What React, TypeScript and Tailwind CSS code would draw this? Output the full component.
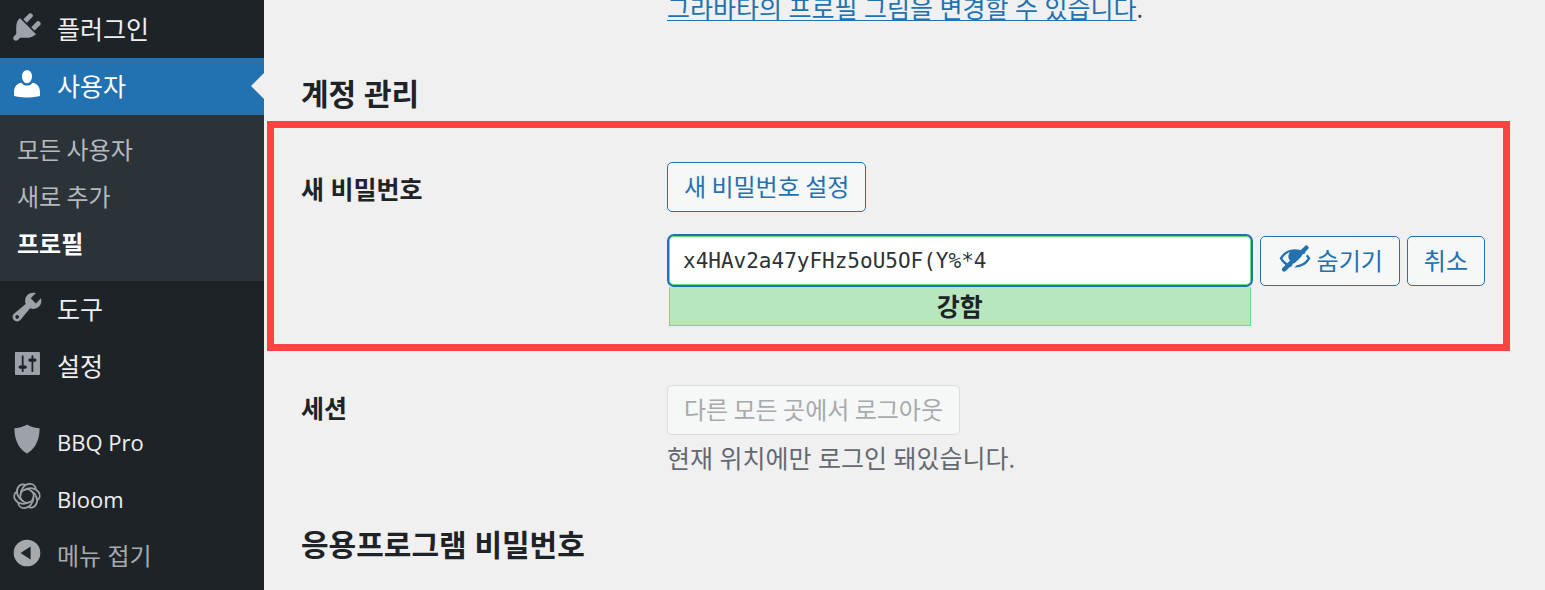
import { ReactNode } from "react";

const ICONS = {
  plugin:
    "M13.11 4.36L9.87 7.6 8 5.73l3.24-3.24c.35-.34 1.05-.2 1.56.32.52.51.66 1.21.31 1.55zm-8 1.77l.91-1.12 9.01 9.01-1.19.84c-.71.71-2.63 1.16-3.82 1.16H6.14L4.9 17.26c-.59.59-1.54.59-2.12 0-.59-.58-.59-1.53 0-2.12l1.24-1.24v-3.88c0-1.13.4-3.19 1.09-3.89zm7.26 3.97l3.24-3.24c.34-.35 1.04-.21 1.55.31.52.51.66 1.21.31 1.55l-3.24 3.25z",
  user: "M10 9.6c-1.7 0-2.8-2-2.8-3.9S8.3 2.3 10 2.3s2.8 1.500 2.8 3.400S11.700 9.600 10 9.600zM7 9.300Q8 10.900 10 10.900T13 9.300C15.700 9.600 17.200 11.800 17.200 14.200V16.600S13.700 17.500 10 17.500 2.800 16.600 2.800 16.600V14.200C2.800 11.800 4.300 9.600 7 9.300z",
  tools:
    "M16.68 9.77c-1.34 1.34-3.3 1.67-4.95.99l-5.41 6.52c-.99.99-2.59.99-3.58 0s-.99-2.59 0-3.57l6.52-5.42c-.68-1.65-.35-3.61.99-4.95 1.28-1.28 3.12-1.62 4.72-1.06l-2.89 2.89 2.82 2.82 2.86-2.87c.53 1.58.18 3.39-1.08 4.65zM3.81 16.21c.4.39 1.04.39 1.43 0 .4-.4.4-1.04 0-1.43-.39-.4-1.03-.4-1.43 0-.39.39-.39 1.03 0 1.43z",
  settings:
    "M17.200 15.600V3.800Q17.200 3.300 16.700 3.300H3.800Q3.300 3.300 3.300 3.800V15.600Q3.300 16.100 3.800 16.100H16.700Q17.200 16.100 17.200 15.600zM8.100 10.800H9a.9.9 0 0 1 0 1.800H8.100V14a.5.5 0 0 1-1 0V12.600H6.200a.9.9 0 0 1 0-1.800H7.100V5.600a.5.5 0 0 1 1 0zM12.500 8.700H11.600a.9.9 0 0 1 0-1.800H12.500V5.600a.5.5 0 0 1 1 0V6.900H14.400a.9.9 0 0 1 0 1.800H13.500V14a.5.5 0 0 1-1 0z",
  shield: "M10 2s3 2 7 2c0 11-7 14-7 14S3 15 3 4c4 0 7-2 7-2z",
  collapse: "M10 2.6a7.4 7.4 0 1 0 0 14.8a7.4 7.4 0 1 0 0-14.8zM12 6.4v7.2L6.4 10z",
};

function Icon({ name }: { name: keyof typeof ICONS }) {
  return (
    <svg viewBox="0 0 20 20" className="mt-2 size-9 shrink-0 fill-current" fillRule="evenodd" aria-hidden="true">
      <path d={ICONS[name]} />
    </svg>
  );
}

function BloomIcon() {
  return (
    <svg viewBox="0 0 20 20" className="mt-2 size-9 shrink-0 fill-none stroke-current" aria-hidden="true">
      <circle cx="10" cy="10" r="3.7" strokeWidth="0.8" />
      {[0, 60, 120, 180, 240, 300].map((a) => (
        <path
          key={a}
          d="M6.300 10C6.300 6.200 8.600 3.400 11.400 3.300C13.400 3.200 14.800 4.500 14.900 6.400"
          strokeWidth="1"
          transform={`rotate(${a} 10 10)`}
        />
      ))}
    </svg>
  );
}

function HiddenIcon() {
  return (
    <svg viewBox="0 0 20 20" className="mb-1 size-9 shrink-0" fill="none" stroke="currentColor" aria-hidden="true">
      <path d="M2.200 10.200C5.600 4.300 14.400 4.300 17.800 10.200C14.400 16.100 5.600 16.100 2.200 10.200z" strokeWidth="1.3" />
      <circle cx="10" cy="9.2" r="3.7" fill="currentColor" stroke="none" />
      <path d="M6 17.700L18.300 5.700" stroke="#f6f7f7" strokeWidth="1.6" />
      <path d="M4 16.300L16.300 4.300" strokeWidth="2.5" strokeLinecap="round" />
    </svg>
  );
}

type ItemProps = { icon: ReactNode; label: string; active?: boolean; latin?: boolean };

function MenuItem({ icon, label, active, latin }: ItemProps) {
  return (
    <li className={active ? "relative bg-[#2271b1] text-white" : "text-[#9ca2a7]"}>
      <a href="#" className="flex gap-3 pl-[9px]">
        {icon}
        <span
          className={
            "leading-[57px] " + (active ? "text-white" : "text-[#f0f0f1]") + (latin ? " pt-px text-[22px]" : "")
          }
        >
          {label}
        </span>
      </a>
      {active && (
        <span className="absolute top-[15px] right-0 border-y-[13px] border-r-[13px] border-y-transparent border-r-[#f0f0f1]" />
      )}
    </li>
  );
}

const buttonBase =
  "h-[50px] shrink-0 rounded-[5px] border bg-[#f6f7f7] px-4 pb-0.5 font-['Noto_Sans_CJK_KR',sans-serif] text-[24px]";
const button = buttonBase + " border-[#2271b1] text-[#2271b1]";

export default function App() {
  return (
    <div className="flex h-screen overflow-hidden bg-[#f0f0f1] font-['Open_Sans','Noto_Sans_CJK_KR',sans-serif] text-[25px] text-[#3c434a]">
      <nav className="w-[264px] shrink-0 bg-[#1d2327] pt-px">
        <ul>
          <MenuItem icon={<Icon name="plugin" />} label="플러그인" />
          <MenuItem icon={<Icon name="user" />} label="사용자" active />
          <li className="bg-[#2c3338] pt-2.5 pb-[15px] pl-[17px] font-['Noto_Sans_CJK_KR',sans-serif] text-[24px] leading-[47px] text-[#b4b9be]">
            <ul>
              <li><a href="#">모든 사용자</a></li>
              <li><a href="#">새로 추가</a></li>
              <li><a href="#" className="font-bold text-white">프로필</a></li>
            </ul>
          </li>
          <MenuItem icon={<Icon name="tools" />} label="도구" />
          <MenuItem icon={<Icon name="settings" />} label="설정" />
        </ul>
        <ul className="mt-[18px] *:h-[57px]">
          <MenuItem icon={<Icon name="shield" />} label="BBQ Pro" latin />
          <MenuItem icon={<BloomIcon />} label="Bloom" latin />
        </ul>
        <button className="flex gap-3 pl-[9px] text-[#a7aaad]">
          <Icon name="collapse" />
          <span className="text-[24px] leading-[57px]">메뉴 접기</span>
        </button>
      </nav>

      <main className="min-w-0 flex-1 pl-[3px]">
        <p className="pl-[400px] leading-4">
          <a href="#" className="text-[#2271b1] underline decoration-1 underline-offset-2">
            그라바타의 프로필 그림을 변경할 수 있습니다
          </a>
          .
        </p>

        <h2 className="mt-[58px] pl-[34px] text-[30px] leading-10 font-bold text-[#1d2327]">계정 관리</h2>

        <section className="mt-[7px] mr-[35px] flex border-[7px] border-[#ff4141] pt-[34px] pr-[18px] pb-[18px] pl-[27px]">
          <label htmlFor="pass1" className="w-[366px] shrink-0 pt-[7px] leading-10 font-bold text-[#1d2327]">
            새 비밀번호
          </label>
          <div className="min-w-0 flex-1">
            <button className={button}>새 비밀번호 설정</button>
            <div className="mt-[22px] flex items-start gap-[7px]">
              <div className="min-w-0 flex-1">
                <input
                  id="pass1"
                  type="text"
                  defaultValue="x4HAv2a47yFHz5oU5OF(Y%*4"
                  className="block h-[53px] w-full rounded-[7px] border-2 border-[#2271b1] bg-white px-3.5 font-['DejaVu_Sans_Mono',monospace] text-[21px] text-[#2c3338] inset-ring inset-ring-[#68de7c] outline-none"
                />
                <div className="mx-0.5 h-[39px] border border-t-0 border-[#68de7c] bg-[#b8e6bf] text-center leading-[38px] font-bold text-[#1d2327]">
                  강함
                </div>
              </div>
              <button className={button + " mt-0.5 flex items-center gap-1"}>
                <HiddenIcon />
                숨기기
              </button>
              <button className={button + " mt-0.5"}>취소</button>
            </div>
          </div>
        </section>

        <section className="mt-[34px] flex pl-[34px]">
          <h3 className="w-[366px] shrink-0 pt-[3px] leading-10 font-bold text-[#1d2327]">세션</h3>
          <div>
            <button disabled className={buttonBase + " border-[#dcdcde] text-[#a7aaad]"}>
              다른 모든 곳에서 로그아웃
            </button>
            <p className="mt-[3px] leading-10 text-[#646970]">현재 위치에만 로그인 돼있습니다.</p>
          </div>
        </section>

        <h2 className="mt-[47px] pl-[34px] text-[30px] leading-10 font-bold text-[#1d2327]">응용프로그램 비밀번호</h2>
      </main>
    </div>
  );
}
